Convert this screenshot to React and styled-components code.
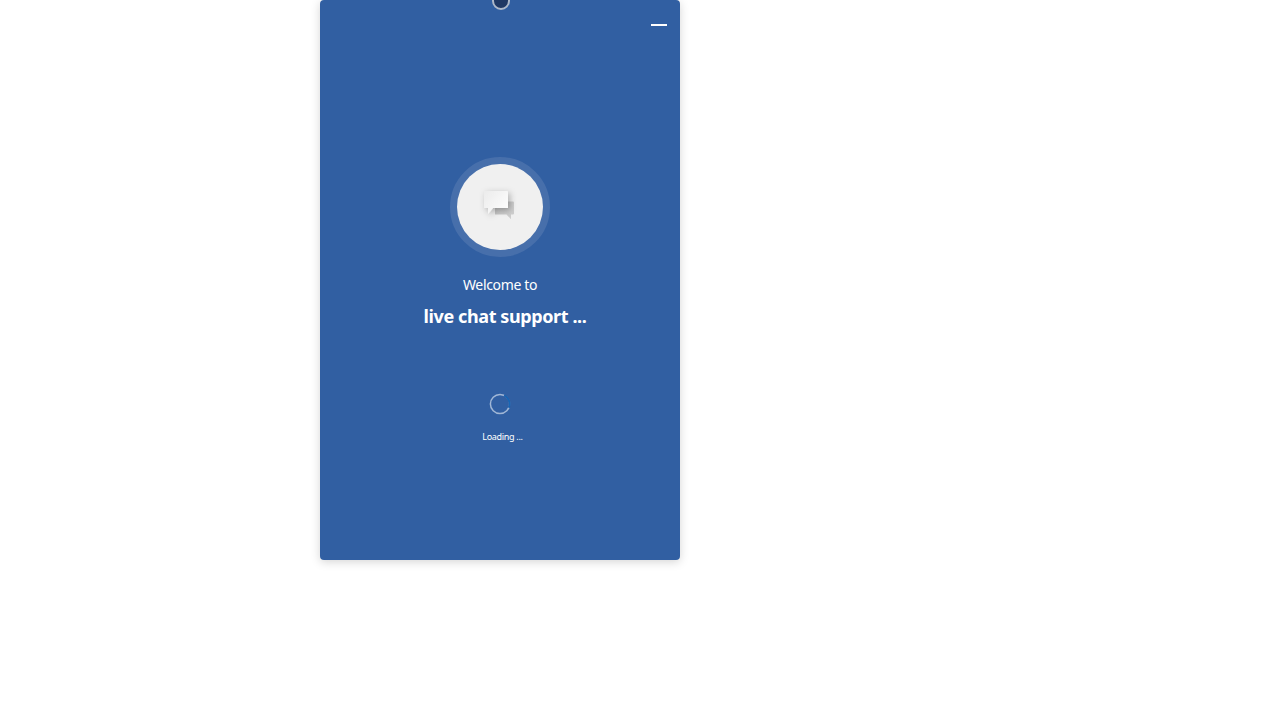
import React from 'react';
import styled, { createGlobalStyle } from 'styled-components';

const GlobalStyle = createGlobalStyle`
  * { box-sizing: border-box; }
  body {
    margin: 0;
    background: #fff;
    font-family: 'Noto Sans', 'Open Sans', sans-serif;
  }
`;

const Page = styled.main`
  height: 720px;
  padding-left: 320px;
  overflow: hidden;
`;

const ChatWindow = styled.section`
  position: relative;
  display: flex;
  flex-direction: column;
  align-items: center;
  width: 360px;
  height: 560px;
  overflow: hidden;
  border-radius: 4px;
  background: #315fa2;
  color: #fff;
`;

const Shadow = styled.div`
  width: 360px;
  border-radius: 4px;
  box-shadow: 0 2px 10px rgba(0, 0, 0, 0.17);
`;

const Knob = styled.span`
  position: absolute;
  top: -8px;
  left: 172px;
  width: 18px;
  height: 18px;
  border: 2px solid #adb8c9;
  border-radius: 50%;
  background: #1f3864;
`;

const TitleBar = styled.header`
  display: flex;
  justify-content: flex-end;
  width: 100%;
  height: 157px;
  padding: 24px 13px 0 0;
`;

const Minimize = styled.button`
  width: 16px;
  height: 2px;
  padding: 0;
  border: 0;
  background: #fff;
`;

const Avatar = styled.div`
  display: flex;
  flex: none;
  width: 100px;
  height: 100px;
  border: 7px solid #476fab;
  border-radius: 50%;
  background: #476fab;
`;

const AvatarDisc = styled.div`
  width: 86px;
  height: 86px;
  border-radius: 50%;
  background: #f0f0f0;
`;

const Line = styled.p`
  flex: none;
  margin: ${(p) => p.$gap}px 0 0 ${(p) => p.$shift || 0}px;
  font-size: ${(p) => p.$size}px;
  font-weight: ${(p) => p.$weight || 400};
  line-height: ${(p) => p.$height}px;
  letter-spacing: ${(p) => p.$tracking || 0}px;
  white-space: nowrap;
`;

const Spinner = styled.svg`
  flex: none;
  width: 22px;
  height: 22px;
  margin-top: 64px;
`;

function ChatIcon() {
  return (
    <svg width="86" height="86" viewBox="0 0 86 86" aria-hidden="true">
      <defs>
        <linearGradient id="front" x1="0" y1="0" x2="1" y2="0.8">
          <stop offset="0" stopColor="#ebebeb" />
          <stop offset="1" stopColor="#fdfdfd" />
        </linearGradient>
        <linearGradient id="back" x1="0" y1="0" x2="1" y2="0.4">
          <stop offset="0" stopColor="#c0c0c0" />
          <stop offset="1" stopColor="#cdcdcd" />
        </linearGradient>
        <filter id="soft" x="-50%" y="-50%" width="200%" height="200%">
          <feDropShadow dx="2" dy="2" stdDeviation="3.2" floodColor="#000" floodOpacity="0.28" />
        </filter>
      </defs>
      <path d="M38 37.5h18q1 0 1 1v11q0 1-1 1h-2v4.7l-4.5-4.7H38z" fill="url(#back)" />
      <path d="M28 27h22q1 0 1 1v16H36l-5 6v-6h-4V28q0-1 1-1z" fill="url(#front)" filter="url(#soft)" />
    </svg>
  );
}

export default function App() {
  return (
    <Page>
      <GlobalStyle />
      <Shadow>
        <ChatWindow>
          <Knob />
          <TitleBar>
            <Minimize aria-label="Minimize" />
          </TitleBar>
          <Avatar>
            <AvatarDisc>
              <ChatIcon />
            </AvatarDisc>
          </Avatar>
          <Line $gap={18} $size={14} $height={20} $tracking={-0.35}>Welcome to</Line>
          <Line $gap={8} $shift={10} $size={18} $weight={700} $height={26} $tracking={-0.4}>live chat support ...</Line>
          <Spinner viewBox="0 0 22 22" fill="none" strokeWidth="1.5">
            <circle cx="11" cy="11" r="9.6" stroke="#a1b7d6" />
            <path d="M15.2 2.36A9.6 9.6 0 0 1 19.9 14.6" stroke="#315fa2" strokeWidth="2.2" />
            <path d="M15.2 2.36A9.6 9.6 0 0 1 19.9 14.6" stroke="#1766b5" />
          </Spinner>
          <Line $gap={16} $shift={5} $size={9} $height={12} $tracking={-0.3}>Loading ...</Line>
        </ChatWindow>
      </Shadow>
    </Page>
  );
}
